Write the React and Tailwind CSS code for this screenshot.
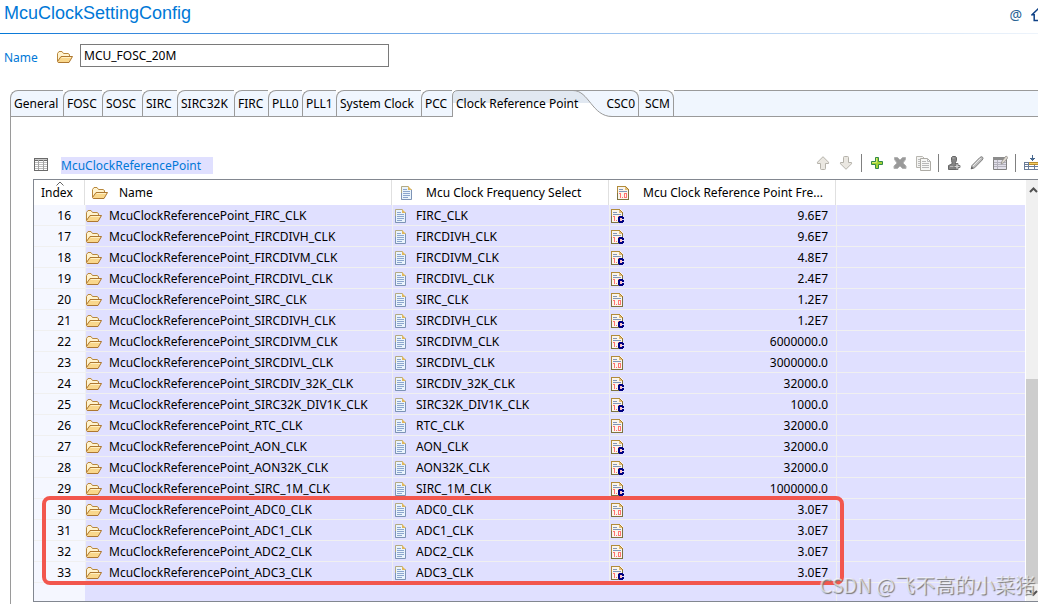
import React, { useState } from "react";

const tabs = [
  { label: "General", width: "w-[53px]" },
  { label: "FOSC", width: "w-[39px]" },
  { label: "SOSC", width: "w-[40px]" },
  { label: "SIRC", width: "w-[35px]" },
  { label: "SIRC32K", width: "w-[57px]" },
  { label: "FIRC", width: "w-[34px]" },
  { label: "PLL0", width: "w-[34px]" },
  { label: "PLL1", width: "w-[34px]" },
  { label: "System Clock", width: "w-[85px]" },
  { label: "PCC", width: "w-[31px]" },
];

const rows = [
  [16, "FIRC_CLK", "9.6E7", true],
  [17, "FIRCDIVH_CLK", "9.6E7", true],
  [18, "FIRCDIVM_CLK", "4.8E7", true],
  [19, "FIRCDIVL_CLK", "2.4E7", true],
  [20, "SIRC_CLK", "1.2E7", false],
  [21, "SIRCDIVH_CLK", "1.2E7", true],
  [22, "SIRCDIVM_CLK", "6000000.0", true],
  [23, "SIRCDIVL_CLK", "3000000.0", false],
  [24, "SIRCDIV_32K_CLK", "32000.0", true],
  [25, "SIRC32K_DIV1K_CLK", "1000.0", true],
  [26, "RTC_CLK", "32000.0", false],
  [27, "AON_CLK", "32000.0", true],
  [28, "AON32K_CLK", "32000.0", true],
  [29, "SIRC_1M_CLK", "1000000.0", true],
  [30, "ADC0_CLK", "3.0E7", false],
  [31, "ADC1_CLK", "3.0E7", false],
  [32, "ADC2_CLK", "3.0E7", false],
  [33, "ADC3_CLK", "3.0E7", true],
];

function FolderIcon() {
  return (
    <svg width="16" height="16" viewBox="0 0 16 16" className="block shrink-0" aria-hidden="true">
      <path d="M0.5 12V4.5L2 2.5H5L6.5 4.5H11L12.5 5.5V8" fill="#fff3cf" stroke="#b8873b" />
      <path d="M0.5 12.5L4 7.5H15.5L12 13.5H1.2Z" fill="#f9d78c" stroke="#ad7730" />
      <path d="M4.8 8.5H14" stroke="#fff0c4" />
    </svg>
  );
}

function PageIcon() {
  return (
    <svg width="16" height="16" viewBox="0 0 16 16" className="block shrink-0" aria-hidden="true">
      <path d="M2.5 1.5H9.5L12.5 4.5V14.5H2.5Z" fill="#eaf4fc" />
      <path d="M2.5 14.5V1.5H9.5" fill="none" stroke="#b3aa83" />
      <path d="M2.5 8V14.5H12.5V4.5" fill="none" stroke="#7d93b5" />
      <path d="M9 1V5H13Z" fill="#dfb65c" />
      <path d="M4 4.5H8M4 6.5H11M4 8.5H11M4 10.5H11M4 12.5H9" stroke="#8ba5cd" />
    </svg>
  );
}

function NumberIcon({ computed = false }) {
  return (
    <svg width="16" height="16" viewBox="0 0 16 16" className="block shrink-0" shapeRendering="crispEdges" aria-hidden="true">
      <path d="M1 1H10L13 4V15H1Z" fill="#fbf5ec" />
      <path d="M1 15V1H2V14H12V5H13V15Z" fill="#7d7340" />
      <path d="M1 8V1H10V2H2V8Z" fill="#b18b3a" />
      <path d="M9 2H10V3H11V4H12V5H9Z" fill="#e3c078" />
      <path d="M10 2H11V3H12V4H13V5H12V4H11V3H10Z" fill="#a97c2b" />
      <path d="M3 4H7V5H3ZM3 6H11V7H3Z" fill="#8196b8" />
      <path d="M3 8H5V13H4V9H3ZM6 12H7V13H6ZM8 8H11V13H8ZM9 9V12H10V9Z" fill="#ff7373" fillRule="evenodd" />
      {computed && (
        <>
          <path d="M10 10H13V13H10Z" fill="#ffc4c4" />
          <path d="M12 10H14V13H12Z" fill="#e0e0ff" />
          <path d="M9 8H13V9H14V11H12V10H10V13H12V12H14V14H13V15H9V14H8V9H9Z" fill="#000080" />
        </>
      )}
    </svg>
  );
}

function TableIcon() {
  return (
    <svg width="16" height="16" viewBox="0 0 16 16" className="block shrink-0" shapeRendering="crispEdges" aria-hidden="true">
      <path d="M1 2H15V15H1Z" fill="#6b6b6b" />
      <path d="M2 5H14V14H2Z" fill="#ffffff" />
      <path d="M2 3H14V4H2Z" fill="#c9c9c9" />
      <path d="M2 6H14V7H2ZM2 8H14V9H2ZM2 10H14V11H2ZM2 12H14V13H2Z" fill="#bdbdbd" />
      <path d="M5 4H6V14H5ZM10 4H11V14H10Z" fill="#a5a5a5" />
    </svg>
  );
}

function ArrowIcon({ down = false }) {
  return (
    <svg width="16" height="16" viewBox="0 0 16 16" className={down ? "block rotate-180" : "block"} aria-hidden="true">
      <path d="M8 1.7L13.5 7.2V8.5H10.5V13.5Q10.5 14.5 9.5 14.5H6.5Q5.5 14.5 5.5 13.5V8.5H2.5V7.2Z" fill="#eae7e1" stroke="#b5b2aa" />
    </svg>
  );
}

function AddIcon() {
  return (
    <svg width="16" height="16" viewBox="0 0 16 16" className="block" aria-hidden="true">
      <path d="M6.5 2.5H9.5V6.5H13.5V9.5H9.5V13.5H6.5V9.5H2.5V6.5H6.5Z" fill="#a5d435" stroke="#328a49" />
      <path d="M7.5 3V7.5H3" fill="none" stroke="#d5ec70" />
    </svg>
  );
}

function RemoveIcon() {
  return (
    <svg width="16" height="16" viewBox="0 0 16 16" className="block" aria-hidden="true">
      <path d="M2.5 2.5H5.5L8 5L10.5 2.5H13.5V4.500L11 8L14 11V13.500H10.500L8 11L5.500 13.500H2V11L5 8L2.500 4.500Z" fill="#9a9a9a" stroke="#b2b2b2" />
    </svg>
  );
}

function CopyIcon() {
  return (
    <svg width="16" height="16" viewBox="0 0 16 16" className="block" aria-hidden="true">
      <path d="M1.5 1.5H7.5L9.5 3.5V12.5H1.5Z" fill="#f4f4f2" stroke="#b8b6b0" />
      <path d="M3 4.5H5M3 6.5H5M3 8.5H5M3 10.5H5" stroke="#bcbcbc" />
      <path d="M5.5 3.5H12.5L15.5 6.5V15.5H5.5Z" fill="#f7f7f5" stroke="#adaba5" />
      <path d="M12.5 3.5V6.5H15.5M7 6.5H11M7 8.5H14M7 10.5H14M7 12.5H14" fill="none" stroke="#b8b8b8" />
    </svg>
  );
}

function StampIcon() {
  return (
    <svg width="16" height="16" viewBox="0 0 16 16" className="block" aria-hidden="true">
      <path d="M5.5 2.5L6.5 1.5H9.5L10.5 2.5V5.500L9.500 7.5V9L11.5 10.5V14.5H2.5V10.5L6 9V7.5L5.5 5.5Z" fill="#858585" stroke="#666666" />
      <path d="M6.5 3H8.500M4 11.5H9" stroke="#b9b9b9" />
      <path d="M10 8.5H12V10.5H14V12.5H12V14.5H10V12.5H8V10.5H10Z" fill="#d4d4d4" stroke="#777777" />
    </svg>
  );
}

function PencilIcon() {
  return (
    <svg width="16" height="16" viewBox="0 0 16 16" className="block" aria-hidden="true">
      <path d="M2.2 13.8L3 10.500L10.8 2.6Q12.5 1 13.6 2.2Q14.6 3.3 13.2 5L5.6 12.8Z" fill="#bdbdbd" stroke="#808080" />
      <path d="M4 11L11.7 3.2" stroke="#ececec" />
      <path d="M1.8 14.2L2.7 11.5L4.5 13.3Z" fill="#606060" />
    </svg>
  );
}

function EditTableIcon() {
  return (
    <svg width="16" height="16" viewBox="0 0 16 16" className="block" aria-hidden="true">
      <path d="M1.5 2.5H14.5V14.5H1.5Z" fill="#e2e0ea" stroke="#808080" />
      <path d="M1 2H15V5H1Z" fill="#8c8c8c" />
      <path d="M2 7.5H14M2 9.5H14M2 11.5H14M5.5 5V14" stroke="#b3b1bc" />
      <path d="M9 9L10 6L14 1L16 2.5L12 7.5Z" fill="#ddd8d0" stroke="#8a8783" strokeWidth="0.7" />
    </svg>
  );
}

function InsertRowIcon() {
  return (
    <svg width="16" height="16" viewBox="0 0 16 16" className="block shrink-0" shapeRendering="crispEdges" aria-hidden="true">
      <path d="M9 0H10V3H12V4H11V5H10V6H9V5H8V4H7V3H9Z" fill="#48688f" />
      <path d="M1 7H16V15H1Z" fill="#6a7c98" />
      <path d="M6 7H16V8H6ZM6 9H16V10H6Z" fill="#b98a2c" />
      <path d="M6 8H16V9H6Z" fill="#f5cf63" />
      <path d="M2 8H5V9H2ZM2 10H5V11H2ZM6 10H11V11H6ZM12 10H16V11H12ZM2 12H5V14H2ZM6 12H11V14H6ZM12 12H16V14H12Z" fill="#ffffff" />
    </svg>
  );
}

function HomeIcon() {
  return (
    <svg width="14" height="14" viewBox="0 0 14 14" className="block shrink-0" aria-hidden="true">
      <path d="M1 6.8L7 1L13 6.8H10.8V12.5H3.2V6.8Z" fill="#ffffff" stroke="#0e4186" strokeWidth="1.5" />
    </svg>
  );
}

function ToolButton({ label, children }) {
  return (
    <button type="button" aria-label={label} className="block h-4 w-4 shrink-0">
      {children}
    </button>
  );
}

function Divider() {
  return <span className="mx-[7px] h-[18px] w-px shrink-0 bg-[#808080]" />;
}

function Tab({ label, width }) {
  return (
    <button
      type="button"
      role="tab"
      aria-selected="false"
      className={`${width} h-[27px] shrink-0 rounded-tl-lg border-t border-b border-l border-[#9a9a9a] bg-[#f0f6fe] pl-[3px] text-left whitespace-nowrap`}
    >
      {label}
    </button>
  );
}

function RightTab({ label, width }) {
  return (
    <button
      type="button"
      role="tab"
      aria-selected="false"
      className={`${width} h-[27px] shrink-0 rounded-tr-lg border-t border-r border-b border-[#9a9a9a] bg-[#f0f6fe] pr-[3px] text-right whitespace-nowrap`}
    >
      {label}
    </button>
  );
}

function ActiveTab() {
  return (
    <button type="button" role="tab" aria-selected="true" className="relative z-10 h-[27px] w-[150px] shrink-0 pl-1 text-left whitespace-nowrap">
      <svg width="160" height="27" viewBox="0 0 160 27" className="absolute top-0 left-0" aria-hidden="true">
        <path d="M4 0H150V27H4Z" fill="#f0f6fe" />
        <path d="M0.5 27V6Q0.5 0.5 6 0.5H121C137 0.5 140 26.5 160 26.5V27Z" fill="#ffffff" />
        <path d="M0.5 13V6Q0.5 0.5 6 0.5H121C130 0.5 134 7 138.5 13Z" fill="#e1e8f1" />
        <path d="M0.5 27V6Q0.5 0.5 6 0.5H121C137 0.5 140 26.5 160 26.5M121 0.5H160" fill="none" stroke="#9a9a9a" />
      </svg>
      <span className="relative">Clock Reference Point</span>
    </button>
  );
}

const headCell = "relative p-0 text-left font-normal";
const headLabel = "flex items-center gap-[11px] pl-[7px]";
const bodyCell = "border-b border-l border-[#f0f0f0] p-0 pt-[2px]";

export default function App() {
  const [name, setName] = useState("MCU_FOSC_20M");
  return (
    <div className="flex min-h-screen flex-col overflow-hidden bg-white font-['Noto_Sans','Noto_Sans_CJK_SC',sans-serif] text-[12px] leading-4 text-black">
      <header className="flex h-[33px] items-start justify-between pl-1">
        <h1 className="pt-[3px] font-['Liberation_Sans',sans-serif] text-[18px] leading-5 text-[#0078d7]">McuClockSettingConfig</h1>
        <div className="-mr-[7px] flex items-center gap-[9px] pt-[7px]">
          <a href="#help" className="text-[14px] leading-4 text-[#2a6496]">@</a>
          <a href="#home" aria-label="Home"><HomeIcon /></a>
        </div>
      </header>
      <div className="h-px bg-linear-to-r from-[#0078d7] to-[#eef4fb]" />

      <div className="flex h-14 items-start pt-[10px] pl-1">
        <label htmlFor="config-name" className="w-[53px] pt-[6px] text-[#0078d7]">Name</label>
        <span className="mr-[7px] pt-[5px]"><FolderIcon /></span>
        <input
          id="config-name"
          value={name}
          onChange={(e) => setName(e.target.value)}
          className="h-[23px] w-[309px] border border-[#7a7a7a] bg-white px-[3px] outline-none"
        />
      </div>

      <main className="ml-[10px] flex flex-1 flex-col">
        <div role="tablist" className="flex h-[27px]">
          {tabs.map((t) => <Tab key={t.label} {...t} />)}
          <ActiveTab />
          <RightTab label="CSC0" width="w-[37px]" />
          <RightTab label="SCM" width="w-[35px]" />
          <div className="flex-1 border-t border-b border-[#9a9a9a] bg-[#f0f6fe]" />
        </div>

        <section className="flex flex-1 flex-col border-l border-[#9a9a9a] pl-[22px]">
          <div className="flex h-[62px] items-end justify-between">
            <div className="flex items-end gap-3 pb-[5px]">
              <span className="pb-[2px]"><TableIcon /></span>
              <h2 className="bg-[#e0e0ff] pr-3 leading-[17px] text-[#0078d7]">McuClockReferencePoint</h2>
            </div>
            <div className="-mr-px flex items-center pb-[7px]">
              <div className="flex gap-[7px]">
                <ToolButton label="Move up"><ArrowIcon /></ToolButton>
                <ToolButton label="Move down"><ArrowIcon down /></ToolButton>
              </div>
              <Divider />
              <div className="flex gap-[7px]">
                <ToolButton label="Add"><AddIcon /></ToolButton>
                <ToolButton label="Delete"><RemoveIcon /></ToolButton>
                <ToolButton label="Duplicate"><CopyIcon /></ToolButton>
              </div>
              <Divider />
              <div className="flex gap-[7px]">
                <ToolButton label="Add reference"><StampIcon /></ToolButton>
                <ToolButton label="Edit"><PencilIcon /></ToolButton>
                <ToolButton label="Edit table"><EditTableIcon /></ToolButton>
              </div>
              <Divider />
              <ToolButton label="Insert row"><InsertRowIcon /></ToolButton>
            </div>
          </div>

          <div className="relative flex border-y border-l border-[#828790]">
            <table className="w-full flex-1 table-fixed border-separate border-spacing-0">
              <colgroup>
                <col className="w-[51px]" />
                <col className="w-[307px]" />
                <col className="w-[217px]" />
                <col className="w-[227px]" />
                <col />
              </colgroup>
              <thead>
                <tr className="h-[25px]">
                  <th className={`${headCell} border-r border-[#e0e0e0]`}>
                    <svg width="8" height="5" viewBox="0 0 8 5" className="absolute top-px left-[22px]" aria-hidden="true">
                      <path d="M0.5 4.5L4 1L7.5 4.5" fill="none" stroke="#666666" />
                    </svg>
                    <span className="pl-[7px]">Index</span>
                  </th>
                  <th className={`${headCell} border-r border-[#e0e0e0]`}>
                    <div className={headLabel}><FolderIcon />Name</div>
                  </th>
                  <th className={`${headCell} border-r border-[#e0e0e0]`}>
                    <div className={headLabel}><PageIcon />Mcu Clock Frequency Select</div>
                  </th>
                  <th className={`${headCell} border-r border-[#e0e0e0]`}>
                    <div className={headLabel}><NumberIcon />Mcu Clock Reference Point Fre...</div>
                  </th>
                  <th className={headCell} aria-label="Spacer" />
                </tr>
              </thead>
              <tbody>
                {rows.map(([index, clock, value, computed]) => (
                  <tr key={index} className="h-[21px] bg-[#e0e0ff]">
                    <td className="border-b border-[#f0f0f0] bg-[#f5f7ff] p-0 pt-[2px] pr-[14px] text-right">{index}</td>
                    <td className={bodyCell}>
                      <div className="flex items-center gap-[7px]"><FolderIcon />McuClockReferencePoint_{clock}</div>
                    </td>
                    <td className={bodyCell}>
                      <div className="flex items-center gap-[7px]"><PageIcon />{clock}</div>
                    </td>
                    <td className={bodyCell}>
                      <div className="flex items-center justify-between pr-2"><NumberIcon computed={computed} />{value}</div>
                    </td>
                    <td className={bodyCell} />
                  </tr>
                ))}
                <tr className="h-[18px] bg-[#e0e0ff]">
                  <td className="bg-[#f5f7ff] p-0" />
                  <td className="p-0" />
                  <td className="p-0" />
                  <td className="p-0" />
                  <td className="border-l border-[#f0f0f0] p-0" />
                </tr>
              </tbody>
            </table>

            <div className="ml-px flex w-3 shrink-0 flex-col bg-[#f0f0f0]">
              <svg width="14" height="17" viewBox="0 0 14 17" className="block" aria-hidden="true">
                <path d="M4 12L7.5 8.5L11 12" fill="none" stroke="#505050" strokeWidth="2" />
              </svg>
              <div className="mt-[182px] flex-1 bg-[#cdcdcd]" />
              <svg width="14" height="17" viewBox="0 0 14 17" className="block" aria-hidden="true">
                <path d="M4 7L7.5 10.5L11 7" fill="none" stroke="#505050" strokeWidth="2" />
              </svg>
            </div>

            <div className="pointer-events-none absolute bottom-4 left-2 h-[89px] w-[802px] rounded-lg border-4 border-[#f2564d]" />
            <div className="pointer-events-none absolute right-[3px] bottom-[2px] font-['Noto_Sans_CJK_SC',sans-serif] text-[20px] leading-7 whitespace-nowrap text-white/60 [text-shadow:1px_1px_1px_#777777]">
              CSDN @飞不高的小菜猪
            </div>
          </div>
        </section>
      </main>
    </div>
  );
}
